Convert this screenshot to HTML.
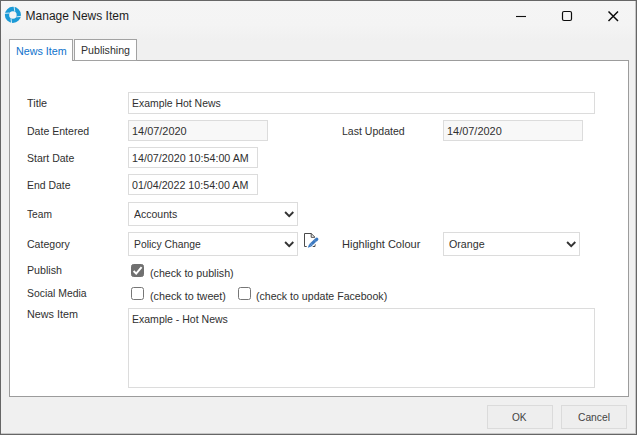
<!DOCTYPE html>
<html>
<head>
<meta charset="utf-8">
<title>Manage News Item</title>
<style>
*{box-sizing:border-box;margin:0;padding:0}
html,body{width:637px;height:435px;overflow:hidden;background:#f0f0f0}
body{font-family:"Liberation Sans",sans-serif;font-size:11px;color:#333;position:relative}
.win{position:absolute;left:0;top:0;width:637px;height:435px;background:#f0f0f0;border:1px solid #666}
.edge{position:absolute;background:#c6c6c6}
.abs{position:absolute}
.t{position:absolute;white-space:nowrap;line-height:14px;color:#303030;transform-origin:0 50%}
.tab{position:absolute;top:39px;border:1px solid #a2a2a2;background:#fff}
.panel{position:absolute;left:9px;top:60px;width:620px;height:337px;background:#fff;border:1px solid #9c9c9c}
.fld{position:absolute;height:21px;border:1px solid #dcdcdc;background:#fff}
.ro{background:#f8f8f8}
.cmb{position:absolute;height:24px;border:1px solid #dcdcdc;background:#fff}
.cb{position:absolute;width:13px;height:13px;border:1px solid #767676;border-radius:2.5px;background:#fff}
.cb.on{background:#707070;border-color:#707070}
.btn{position:absolute;top:405px;width:66px;height:24px;border:1px solid #dbdbdb;background:#eeeeee}
</style>
</head>
<body>
<div class="win"></div>
<div class="abs" style="left:1px;top:1px;width:634px;height:40px;background:linear-gradient(#f5f5f5 0,#f4f4f4 24px,#f0f0f0 40px)"></div>
<div class="edge" style="left:635px;top:1px;width:1px;height:433px"></div>
<div class="edge" style="left:1px;top:433px;width:635px;height:1px"></div>
<svg class="abs" style="left:3px;top:5px" width="20" height="20" viewBox="0 0 20 20">
 <circle cx="9.9" cy="9.9" r="5.9" fill="none" stroke="#1b9ad6" stroke-width="4.3"/>
 <path d="M11.1 1.5L11.8 6.6M18.4 11.3L13.4 11.9M8.6 18.3L8 13.4M1.5 8.4L6.5 8" stroke="#e4f3fa" stroke-width="0.9" fill="none"/>
</svg>
<svg class="abs" style="left:510px;top:5px" width="120" height="22" viewBox="0 0 120 22">
 <path d="M6 11.5H16" stroke="#111" stroke-width="1.1" fill="none"/>
 <rect x="52.5" y="6.5" width="9" height="9" rx="1.5" fill="none" stroke="#0c0c0c" stroke-width="1.2"/>
 <path d="M98.5 6.5L108 16M108 6.5L98.5 16" stroke="#0a0a0a" stroke-width="1.45" fill="none"/>
</svg>

<div class="panel"></div>
<div class="tab" style="left:9px;width:64px;height:22px;border-bottom:0"></div>
<div class="tab" style="left:74px;width:63px;height:22px"></div>

<div class="fld" style="left:128px;top:92px;width:467px;height:22px"></div>
<div class="fld ro" style="left:128px;top:120px;width:140px"></div>
<div class="fld ro" style="left:443px;top:120px;width:140px"></div>
<div class="fld" style="left:128px;top:147px;width:130px"></div>
<div class="fld" style="left:128px;top:174px;width:130px"></div>
<div class="cmb" style="left:128px;top:202px;width:170px"></div>
<svg class="abs" style="left:283px;top:209px" width="12" height="10" viewBox="0 0 12 10"><path d="M2.1 3L6.2 7.1L10.3 3" fill="none" stroke="#333" stroke-width="1.9"/></svg>
<div class="cmb" style="left:128px;top:232px;width:170px"></div>
<svg class="abs" style="left:283px;top:239px" width="12" height="10" viewBox="0 0 12 10"><path d="M2.1 3L6.2 7.1L10.3 3" fill="none" stroke="#333" stroke-width="1.9"/></svg>
<svg class="abs" style="left:302px;top:231px" width="20" height="20" viewBox="0 0 20 20">
 <path d="M13 13V15.5H2.5V2.5H9.2L13 6.3V8" fill="none" stroke="#4a4a4a" stroke-width="1"/>
 <path d="M9.2 2.5V6.3H13" fill="none" stroke="#4a4a4a" stroke-width="1"/>
 <path d="M7.2 15.4L14.9 8.2" stroke="#fff" stroke-width="5" stroke-linecap="round"/>
 <path d="M5.8 16.8L7.1 13.2L9.3 15.5Z" fill="#3a78c0"/>
 <path d="M8.2 14.3L13.9 8.95" stroke="#3a78c0" stroke-width="3.2"/>
 <path d="M8.9 12.4L10.9 14.5M12.6 8.9L14.7 11.1" stroke="#fff" stroke-width="0.5" opacity="0.75"/>
 <path d="M14.5 8.5L14.8 8.2" stroke="#3a78c0" stroke-width="3.2" stroke-linecap="round"/>
</svg>
<div class="cmb" style="left:443px;top:232px;width:137px"></div>
<svg class="abs" style="left:565px;top:239px" width="12" height="10" viewBox="0 0 12 10"><path d="M2.1 3L6.2 7.1L10.3 3" fill="none" stroke="#333" stroke-width="1.9"/></svg>

<div class="cb on" style="left:131px;top:264px"></div>
<svg class="abs" style="left:131px;top:264px" width="13" height="13" viewBox="0 0 13 13"><path d="M2.6 7L5.2 9.6L10.6 3.2" fill="none" stroke="#fff" stroke-width="2"/></svg>
<div class="cb" style="left:131px;top:287px"></div>
<div class="cb" style="left:238px;top:287px"></div>
<div class="fld" style="left:128px;top:308px;width:467px;height:80px"></div>
<div class="btn" style="left:487px"></div>
<div class="btn" style="left:561px"></div>
<div class="t" id="lblTitle" style="left:27.05px;top:96px;transform:scaleX(0.9873);">Title</div>
<div class="t" id="fldTitle" style="left:131.85px;top:96px;transform:scaleX(0.9481);">Example Hot News</div>
<div class="t" id="dateEnt" style="left:26.75px;top:124px;transform:scaleX(0.9591);">Date Entered</div>
<div class="t" id="d1" style="left:131.85px;top:124px;transform:scaleX(0.9926);">14/07/2020</div>
<div class="t" id="lastUpd" style="left:341.55px;top:124px;transform:scaleX(0.9578);">Last Updated</div>
<div class="t" id="d2" style="left:446.85px;top:124px;transform:scaleX(0.9944);">14/07/2020</div>
<div class="t" id="start" style="left:26.80px;top:151px;transform:scaleX(0.9567);">Start Date</div>
<div class="t" id="sd" style="left:131.85px;top:151px;transform:scaleX(0.9742);">14/07/2020 10:54:00 AM</div>
<div class="t" id="end" style="left:26.75px;top:178px;transform:scaleX(0.9475);">End Date</div>
<div class="t" id="ed" style="left:132.35px;top:178px;transform:scaleX(0.9701);">01/04/2022 10:54:00 AM</div>
<div class="t" id="team" style="left:27.20px;top:207px;transform:scaleX(0.9269);">Team</div>
<div class="t" id="acc" style="left:134.30px;top:207px;transform:scaleX(0.9556);">Accounts</div>
<div class="t" id="cat" style="left:26.70px;top:237px;transform:scaleX(0.9582);">Category</div>
<div class="t" id="pol" style="left:133.55px;top:237px;transform:scaleX(0.9405);">Policy Change</div>
<div class="t" id="hl" style="left:341.55px;top:237px;transform:scaleX(1.0013);">Highlight Colour</div>
<div class="t" id="or" style="left:448.80px;top:237px;transform:scaleX(0.9706);">Orange</div>
<div class="t" id="pub" style="left:26.85px;top:263px;transform:scaleX(0.9698);">Publish</div>
<div class="t" id="ctp" style="left:149.90px;top:266px;transform:scaleX(0.9701);">(check to publish)</div>
<div class="t" id="soc" style="left:26.70px;top:286px;transform:scaleX(0.9456);">Social Media</div>
<div class="t" id="ctt" style="left:149.90px;top:289px;transform:scaleX(0.9778);">(check to tweet)</div>
<div class="t" id="ctf" style="left:256.40px;top:289px;transform:scaleX(0.9619);">(check to update Facebook)</div>
<div class="t" id="ni" style="left:26.85px;top:307px;transform:scaleX(0.9802);">News Item</div>
<div class="t" id="ta" style="left:131.85px;top:312px;transform:scaleX(0.9562);">Example - Hot News</div>
<div class="t" id="title" style="left:25.55px;top:8px;transform:scaleX(1.0000);font-size:12px;line-height:16px;color:#1c1c1c">Manage News Item</div>
<div class="t" id="tab1" style="left:15.85px;top:44px;transform:scaleX(0.9762);color:#0f72cc">News Item</div>
<div class="t" id="tab2" style="left:80.95px;top:43px;transform:scaleX(0.9657);">Publishing</div>
<div class="t" id="ok" style="left:512.30px;top:410px;transform:scaleX(0.9180);color:#444">OK</div>
<div class="t" id="cancel" style="left:578.10px;top:410px;transform:scaleX(0.9333);color:#444">Cancel</div>
</body>
</html>
